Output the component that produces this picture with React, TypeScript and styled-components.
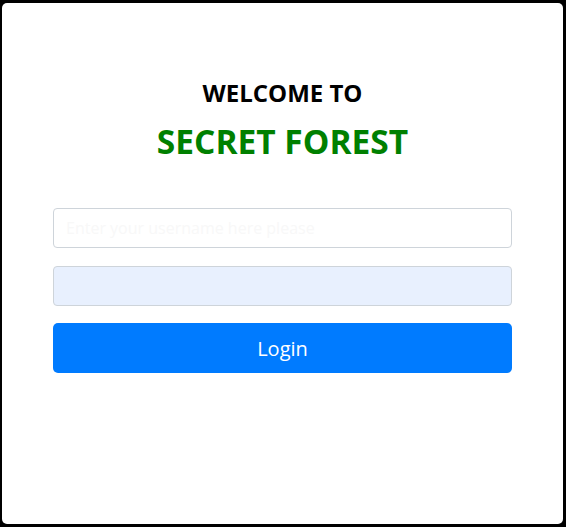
import styled, { createGlobalStyle } from "styled-components";

const GlobalStyle = createGlobalStyle`
  html, body {
    margin: 0;
    padding: 0;
    background: #000;
  }
  * {
    box-sizing: border-box;
  }
`;

const Card = styled.div`
  margin: 3px 3px 3px 2px;
  height: 521px;
  background: #fff;
  border-radius: 5px;
  display: flex;
  flex-direction: column;
  align-items: center;
  padding: 73px 51px 0 51px;
  font-family: "Open Sans", "Noto Sans", sans-serif;
`;

const Welcome = styled.h2`
  margin: 0;
  font-size: 24px;
  font-weight: 700;
  color: #000;
  line-height: 34px;
`;

const Title = styled.h1`
  margin: 9px 0 0 0;
  font-size: 33.5px;
  font-weight: 700;
  color: #008000;
  line-height: 44px;
`;

const Form = styled.form`
  width: 100%;
  margin-top: 45px;
  display: flex;
  flex-direction: column;
  gap: 18px;
`;

const Input = styled.input<{ $filled?: boolean }>`
  width: 100%;
  height: 40px;
  padding: 6px 12px;
  border: 1px solid #ced4da;
  border-radius: 4px;
  font-family: inherit;
  font-size: 16px;
  background: ${(p) => (p.$filled ? "#e8f0fe" : "#fff")};
  outline: none;

  &::placeholder {
    color: #f8f8f8;
  }
`;

const Button = styled.button`
  width: 100%;
  height: 50px;
  margin-top: -1px;
  border: none;
  border-radius: 5px;
  background: #007bff;
  color: #fff;
  font-family: inherit;
  font-size: 20px;
`;

const App = () => {
  return (
    <>
      <GlobalStyle />
      <Card>
        <Welcome>WELCOME TO</Welcome>
        <Title>SECRET FOREST</Title>
        <Form onSubmit={(e) => e.preventDefault()}>
          <Input type="text" placeholder="Enter your username here please" />
          <Input type="password" $filled />
          <Button type="submit">Login</Button>
        </Form>
      </Card>
    </>
  );
};

export default App;
